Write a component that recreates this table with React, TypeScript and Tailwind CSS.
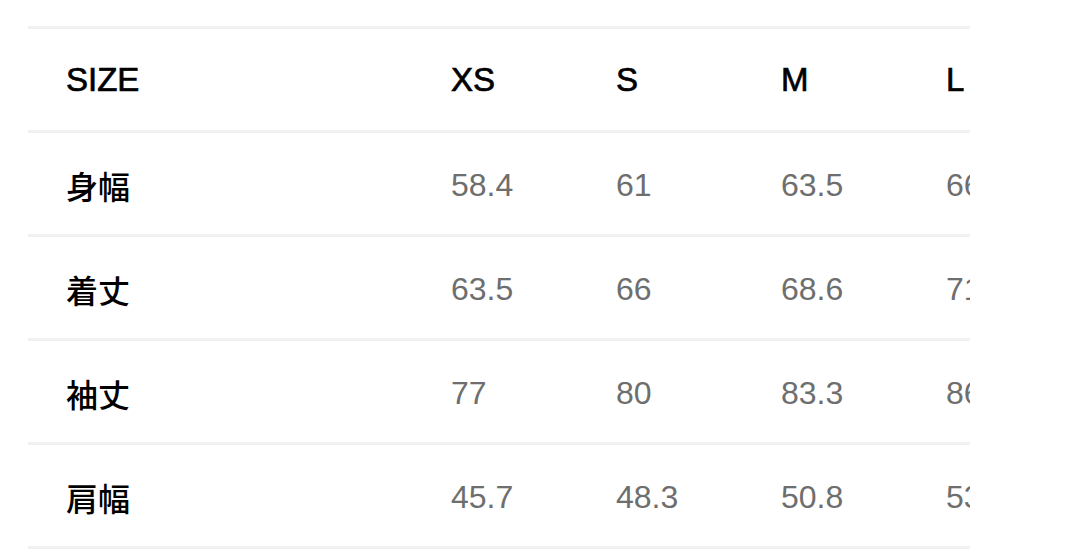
import React from "react";

const sizes = ["XS", "S", "M", "L"];
const rows: { label: string; values: string[] }[] = [
  { label: "身幅", values: ["58.4", "61", "63.5", "66"] },
  { label: "着丈", values: ["63.5", "66", "68.6", "71"] },
  { label: "袖丈", values: ["77", "80", "83.3", "86"] },
  { label: "肩幅", values: ["45.7", "48.3", "50.8", "53"] },
];

export default function App() {
  return (
    <div
      className="w-[1080px] h-[557px] bg-white overflow-hidden pt-[26px]"
      style={{ fontFamily: '"Liberation Sans", Arial, "Noto Sans CJK JP", sans-serif' }}
    >
      <div className="ml-[28px] w-[942px] overflow-hidden border-b-[3px] border-[#f1f1f1]">
        <div className="grid grid-cols-[382px_165px_165px_165px_165px] h-[104px] items-center border-t-[3px] border-[#f1f1f1] text-[33px] text-black [-webkit-text-stroke:0.7px_black]">
          <div className="pl-[38px] whitespace-nowrap">SIZE</div>
          {sizes.map((s) => (
            <div key={s} className="pl-[41px] whitespace-nowrap">{s}</div>
          ))}
        </div>
        {rows.map((r) => (
          <div
            key={r.label}
            className="grid grid-cols-[382px_165px_165px_165px_165px] h-[104px] items-center border-t-[3px] border-[#f1f1f1]"
          >
            <div
              className="pl-[38px] pt-[2px] text-[32px] font-medium text-black whitespace-nowrap"
              style={{ fontFamily: '"Noto Sans CJK JP", sans-serif' }}
            >
              {r.label}
            </div>
            {r.values.map((v, i) => (
              <div key={i} className="pl-[41px] pt-[2px] text-[32px] text-[#6e6e6e] whitespace-nowrap">
                {v}
              </div>
            ))}
          </div>
        ))}
      </div>
    </div>
  );
}
